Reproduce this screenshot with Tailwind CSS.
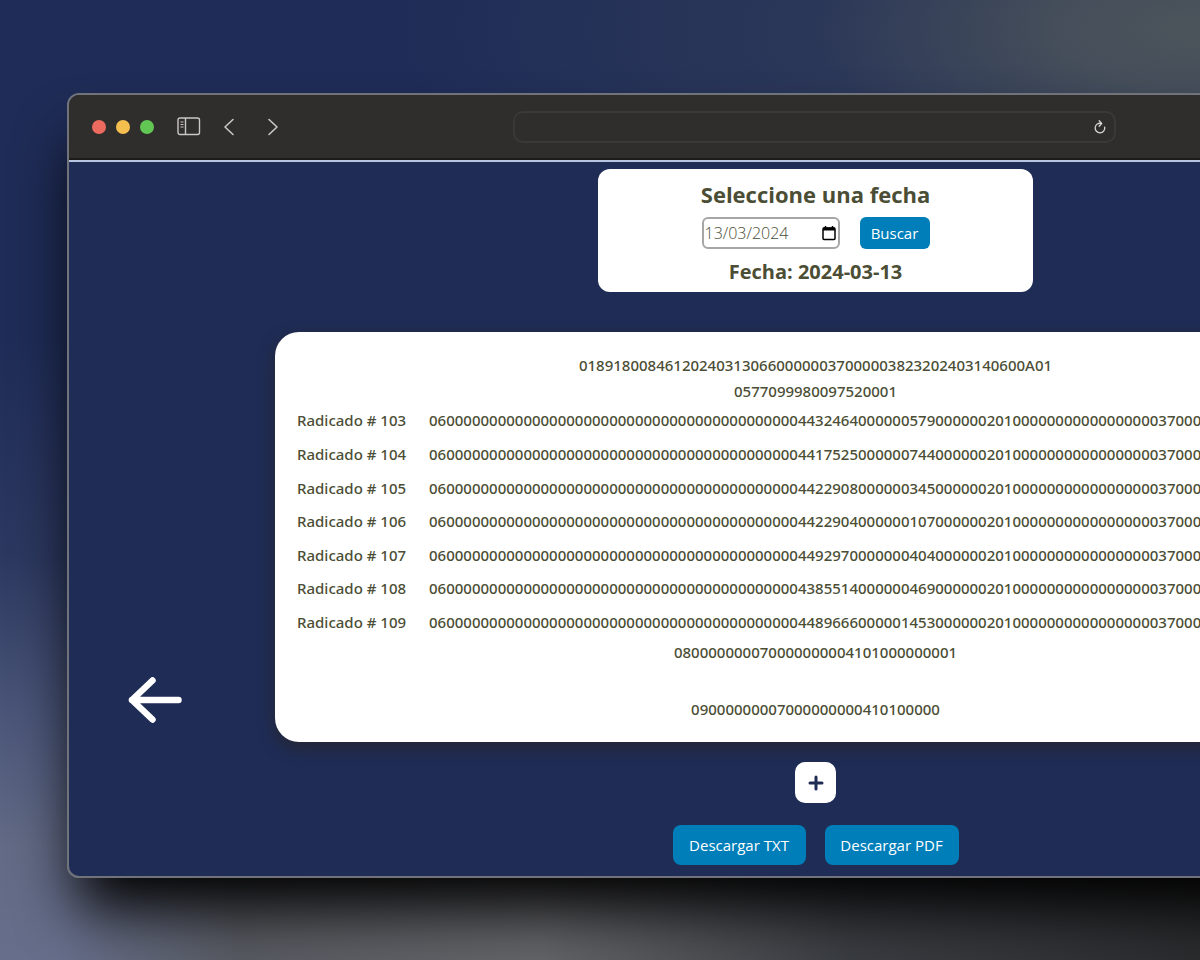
<!DOCTYPE html>
<html lang="es">
<head>
<meta charset="utf-8">
<meta name="viewport" content="width=device-width, initial-scale=1">
<title>Radicados por fecha</title>
<script src="https://cdn.jsdelivr.net/npm/@tailwindcss/browser@4"></script>
</head>
<body class="min-h-screen overflow-hidden bg-[#1f2c57] bg-[radial-gradient(ellipse_800px_320px_at_100%_30px,#4c555b_0%,#454e5a_18%,#343f5999_48%,transparent_100%),linear-gradient(to_right,transparent_60px,#585b62_240px,#646569_540px,#3a3d42_850px,#2b2c2e_1200px),linear-gradient(to_bottom,#1f2c57_0%,#1f2c57_35%,#2c3860_58%,#4b5679_75%,#626a85_88%,#666e8b_100%)] bg-no-repeat [background-size:100%_100%,100%_200px,100%_100%] [background-position:0_0,0_100%,0_0] pt-[93px] pb-20 pl-[67px] font-['Open_Sans','Noto_Sans',sans-serif] text-[#4b4e35]">
<div class="-mr-[364px] rounded-xl shadow-[0_40px_60px_-10px_#000000]">
<div class="overflow-hidden rounded-xl border-2 border-[#70737a] bg-[#1f2c55]">
  <header class="grid h-[65px] grid-cols-[1fr_603px_1fr] items-center border-b-2 border-[#1b1b1b] bg-[#2f2e2c] pl-[23px]">
    <div class="flex items-center text-[#c9c7c4]">
      <div class="flex gap-[10px]">
        <span class="size-[14px] rounded-full bg-[#ed6a5f]"></span>
        <span class="size-[14px] rounded-full bg-[#f5bf50]"></span>
        <span class="size-[14px] rounded-full bg-[#62c655]"></span>
      </div>
      <button type="button" aria-label="Barra lateral" class="ml-[23px]">
        <svg class="h-[19px] w-6" viewBox="0 0 24 19" fill="none" stroke="currentColor" stroke-width="1.4"><rect x="1" y="1" width="21.500" height="16.500" rx="2"/><path d="M8.500 1v16.500"/><path d="M3.500 5h3M3.500 7.500h3M3.500 10h3" stroke-width="1"/></svg>
      </button>
      <button type="button" aria-label="Atrás" class="ml-[22px]">
        <svg class="h-[18px] w-3" viewBox="0 0 12 18" fill="none" stroke="currentColor" stroke-width="1.600" stroke-linecap="round" stroke-linejoin="round"><path d="M10 1.500 2 9l8 7.500"/></svg>
      </button>
      <button type="button" aria-label="Adelante" class="ml-8">
        <svg class="h-[18px] w-3" viewBox="0 0 12 18" fill="none" stroke="currentColor" stroke-width="1.600" stroke-linecap="round" stroke-linejoin="round"><path d="M2 1.500 10 9l-8 7.500"/></svg>
      </button>
    </div>
    <div class="-ml-[13px] flex h-8 w-full items-center rounded-[10px] border-2 border-[#393938] pr-2">
      <input type="text" aria-label="Dirección" class="min-w-0 flex-1 bg-transparent px-3 text-sm text-[#c9c7c4] outline-none">
      <button type="button" aria-label="Recargar" class="text-[#d6d4d1]">
        <svg class="h-4 w-3" viewBox="0 0 12 16" fill="none" stroke="currentColor" stroke-width="1.300" stroke-linecap="round" stroke-linejoin="round"><path d="M10.700 8.200A4.800 4.800 0 1 1 7.200 4.400"/><path d="M5.200 1.800 7.700 4.500 5.200 7.200"/></svg>
      </button>
    </div>
  </header>

  <div class="flex border-t-2 border-[#b9c4e0]">
    <nav class="flex w-[206px] shrink-0 items-end pb-[152px] pl-[58px]">
      <a href="#volver" aria-label="Volver" class="text-white">
        <svg class="h-12 w-14" viewBox="0 0 56 48" fill="none" stroke="currentColor" stroke-width="6.500" stroke-linecap="round" stroke-linejoin="round"><path d="M25.500 4.500 5 24l20.500 19.500M5 24h46.500"/></svg>
      </a>
    </nav>

    <main class="mr-[206px] flex min-w-0 flex-1 flex-col items-center pt-[7px] pb-[11px]">
      <form class="flex w-[435px] flex-col items-center rounded-xl bg-white pt-[7px] pb-[5px]">
        <h1 class="text-[22px] leading-9 font-bold"><label for="fecha">Seleccione una fecha</label></h1>
        <div class="mt-[5px] flex gap-5">
          <div class="flex h-8 w-[138px] items-center rounded-md border-2 border-[#a6a6a6] pr-[2px] pl-px">
            <input id="fecha" type="text" value="13/03/2024" class="min-w-0 flex-1 bg-transparent text-base font-light outline-none">
            <button type="button" aria-label="Abrir calendario" class="text-black">
              <svg class="h-4 w-[14px]" viewBox="0 0 14 16" fill="none" stroke="currentColor" stroke-width="1.500"><rect x="1" y="3" width="12" height="11.500" rx="1"/><path d="M1 4h12" stroke-width="3"/><path d="M3.500 1v2M10.500 1v2"/></svg>
            </button>
          </div>
          <button type="submit" class="h-8 w-[70px] rounded-md bg-[#007eb9] text-[15px] text-white">Buscar</button>
        </div>
        <p class="mt-2 text-xl leading-[30px] font-bold">Fecha: 2024-03-13</p>
      </form>

      <section aria-label="Radicados" class="mt-10 w-full overflow-hidden rounded-3xl bg-white px-5 py-5 font-['Noto_Sans','Open_Sans',sans-serif] text-[15px] leading-[26px] font-medium shadow-[0_6px_16px_rgba(38,38,48,0.9)]">
        <p class="text-center">0189180084612024031306600000037000003823202403140600A01</p>
        <p class="text-center">0577099980097520001</p>
        <table class="-mt-px whitespace-nowrap">
          <tbody>
            <tr class="h-[34px]"><th scope="row" class="w-[134px] min-w-[134px] p-0 pl-[2px] text-left font-medium">Radicado # 103</th><td class="p-0">0600000000000000000000000000000000000000000443246400000057900000020100000000000000000370000000000000000000000000</td></tr>
            <tr class="h-[34px]"><th scope="row" class="p-0 pl-[2px] text-left font-medium">Radicado # 104</th><td class="p-0">0600000000000000000000000000000000000000000441752500000074400000020100000000000000000370000000000000000000000000</td></tr>
            <tr class="h-[33px]"><th scope="row" class="p-0 pl-[2px] text-left font-medium">Radicado # 105</th><td class="p-0">0600000000000000000000000000000000000000000442290800000034500000020100000000000000000370000000000000000000000000</td></tr>
            <tr class="h-[34px]"><th scope="row" class="p-0 pl-[2px] text-left font-medium">Radicado # 106</th><td class="p-0">0600000000000000000000000000000000000000000442290400000010700000020100000000000000000370000000000000000000000000</td></tr>
            <tr class="h-[33px]"><th scope="row" class="p-0 pl-[2px] text-left font-medium">Radicado # 107</th><td class="p-0">0600000000000000000000000000000000000000000449297000000040400000020100000000000000000370000000000000000000000000</td></tr>
            <tr class="h-[34px]"><th scope="row" class="p-0 pl-[2px] text-left font-medium">Radicado # 108</th><td class="p-0">0600000000000000000000000000000000000000000438551400000046900000020100000000000000000370000000000000000000000000</td></tr>
            <tr class="h-[34px]"><th scope="row" class="p-0 pl-[2px] text-left font-medium">Radicado # 109</th><td class="p-0">0600000000000000000000000000000000000000000448966600000145300000020100000000000000000370000000000000000000000000</td></tr>
          </tbody>
        </table>
        <p class="text-center">080000000070000000004101000000001</p>
        <p class="mt-[31px] text-center">09000000007000000000410100000</p>
      </section>

      <button type="button" aria-label="Agregar" class="mt-5 flex size-[41px] items-center justify-center rounded-[10px] bg-white text-[#1f2c55]">
        <svg class="size-4" viewBox="0 0 16 16" fill="none" stroke="currentColor" stroke-width="3" stroke-linecap="round"><path d="M8 2v12M2 8h12"/></svg>
      </button>

      <div class="mt-[22px] flex gap-[19px] text-[15px] text-white">
        <button type="button" class="h-10 w-[133px] rounded-lg bg-[#007eb9]">Descargar TXT</button>
        <button type="button" class="h-10 w-[134px] rounded-lg bg-[#007eb9]">Descargar PDF</button>
      </div>
    </main>
  </div>
</div>
</div>
</body>
</html>
